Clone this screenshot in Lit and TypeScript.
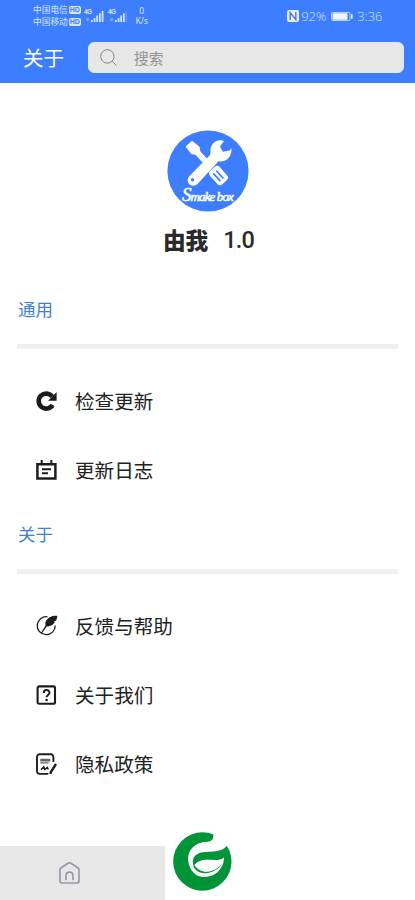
import { LitElement, html, css, svg } from "lit";
import { customElement, property } from "lit/decorators.js";

const icons: Record<string, unknown> = {
  refresh: svg`<path d="M17.600 15A7.500 7.500 0 1 1 17.200 6.600" fill="none" stroke="#1c1c1c" stroke-width="4.600"/><path d="M21.600 2.300v8.400h-8.600z" fill="#1c1c1c"/>`,
  log: svg`<path d="M2.400 5.200h18v14.400h-18z" fill="none" stroke="#1c1c1c" stroke-width="2.500"/><path d="M6.700 1v4M16.300 1v4M7 10.300h9M7 14.300h6" fill="none" stroke="#1c1c1c" stroke-width="2"/>`,
  feather: svg`<path d="M12.500 1.800A9 9 0 1 0 20.200 10.500" fill="none" stroke="#1c1c1c" stroke-width="1.300"/><path d="M22.300.9c-5-.3-9.500 1.300-12 6.300l.2 3.200-4.500 7.300 1 .5 4.700-6.700c4.600 0 7.200-2.500 8.200-4.500l-1.500-.2 2.700-1.300c.8-1.500 1-3 1.200-4.600z" fill="#1c1c1c"/>`,
  question: svg`<rect x="2.600" y="2.400" width="17.400" height="17.400" rx="1.600" fill="none" stroke="#1c1c1c" stroke-width="2.100"/><path d="M8.700 8.900c0-3.800 5.800-3.600 5.800-.3 0 2.200-2.900 2.400-2.900 4.600" fill="none" stroke="#1c1c1c" stroke-width="2"/><circle cx="11.600" cy="16" r="1.300" fill="#1c1c1c"/>`,
  policy: svg`<path d="M18.400 9V3.900a2.600 2.600 0 0 0-2.600-2.600H4.600A2.600 2.600 0 0 0 2 3.900v14.400a2.600 2.600 0 0 0 2.600 2.600h8.700" fill="none" stroke="#1c1c1c" stroke-width="1.900"/><path d="M5.300 5.800h10v2.600h-10zM5.300 9.200h8.400v1.200H5.300z" fill="#666"/><path d="M6 16.800l2.800-3 1 2.700 2.500-2.200 1 2.200" fill="none" stroke="#1c1c1c" stroke-width="1.400"/><path d="M21 11l-5.200 8.100-.4 1.900" fill="none" stroke="#1c1c1c" stroke-width="2.400"/>`,
};

@customElement("menu-section")
class MenuSection extends LitElement {
  @property() label = "";
  @property({ attribute: false }) items: { icon: string; text: string }[] = [];

  static styles = css`
    :host { display: block; }
    .label { height: 36px; line-height: 36px; padding-left: 18px; font-size: 17.5px; color: #4380d4; }
    .rule { height: 5px; margin: 17px 17px 17.5px; background: #efefef; }
    .row { display: flex; align-items: center; height: 69px; padding-left: 34.5px; }
    .icon { width: 23px; height: 23px; flex: none; }
    .text { margin-left: 17.5px; font-size: 19.6px; line-height: 28px; color: #222; }
  `;

  render() {
    return html`
      <div class="label">${this.label}</div>
      <div class="rule"></div>
      ${this.items.map((i) => html`
        <div class="row">
          <svg class="icon" viewBox="0 0 23 23">${icons[i.icon]}</svg>
          <span class="text">${i.text}</span>
        </div>`)}
    `;
  }
}

@customElement("app-root")
class AppRoot extends LitElement {
  static styles = css`
    :host { display: flex; flex-direction: column; height: 900px; background: #fff; overflow: hidden;
      font-family: "Noto Sans CJK SC", sans-serif; }
    svg { display: block; flex: none; }
    .header { height: 83px; background: #3d7eff; flex: none; }
    .status { display: flex; height: 32px; color: #d9e7ff; align-items: center; padding-left: 33px; box-sizing: border-box; }
    .carrier { display: flex; align-items: center; height: 12.5px; font-size: 8.7px; line-height: 12.5px; }
    .hd { margin-left: 1px; width: 12px; height: 8px; border-radius: 2px; background: #d9e7ff; color: #3d7eff;
      font: bold 7px/8px "Liberation Sans", sans-serif; text-align: center; }
    .signals { margin-left: 3px; }
    .speed { margin-left: 7px; width: 14px; font: 8.5px/10px "Noto Sans", sans-serif; text-align: center; }
    .right { display: flex; align-items: center; margin-left: auto; padding-right: 32.5px;
      font: 300 13px/18px "Open Sans", "Noto Sans", sans-serif; }
    .percent { margin-left: 2px; width: 26px; }
    .battery { margin: 0 4px; }
    .bar { display: flex; align-items: center; height: 51px; padding: 0 11px 0 23px; }
    .title { width: 64.5px; font-size: 20.5px; line-height: 30px; margin-top: -1px; color: #fff; }
    .search { display: flex; align-items: center; flex: 1; height: 31px; box-sizing: border-box; border-radius: 6px;
      background: #e7e7e7; border: 1px solid #dce6f5; padding-left: 11px; font-size: 14.7px; line-height: 22px; color: #929292; }
    .glass { margin-right: 17.5px; }
    .brand { display: flex; flex-direction: column; align-items: center; height: 208px; box-sizing: border-box; padding-top: 47px; flex: none; }
    .name { display: flex; margin-top: 12px; gap: 15px; font-size: 22.7px; line-height: 32px; color: #2a2a2a; margin-left: 2px; }
    .app { font-weight: 900; }
    .version { font: 500 23.500px/32px Roboto, sans-serif; letter-spacing: -.8px; }
    .second { margin-top: 11.5px; }
    .footer { display: flex; align-items: flex-end; height: 68px; margin-top: auto; flex: none; }
    .home { width: 165px; height: 54px; background: #e7e7e7; display: flex; align-items: center; box-sizing: border-box; padding-left: 58px; }
    .leaf { align-self: flex-start; margin-left: 8px; }
  `;

  render() {
    return html`
      <header class="header">
        <div class="status">
          <div>
            <div class="carrier">中国电信<span class="hd">HD</span></div>
            <div class="carrier">中国移动<span class="hd">HD</span></div>
          </div>
          <svg class="signals" width="44" height="16" viewBox="0 0 44 16" fill="#d9e7ff">
            <g font-family="Liberation Sans" font-size="6.500" font-weight="bold" letter-spacing="-.6"><text x="0" y="6">4G</text><text x="24" y="6">4G</text></g>
            <path d="M7 12h1.700v2H7zM9.700 10h1.700v4H9.700zM12.300 7.600H14V14h-1.700zM15 5.200h1.700V14H15zM17.700 3h1.700v11h-1.700z"/>
            <path d="M31 12h1.700v2H31zM33.700 10h1.700v4h-1.700zM36.300 7.600H38V14h-1.700zM39 5.200h1.700V14H39z"/>
            <path d="M41.700 3h1v11h-1zM2 10h3v3H2zM26 10h3v3h-3z" opacity=".35"/>
          </svg>
          <div class="speed">0<br />K/s</div>
          <div class="right">
            <svg width="12" height="12" viewBox="0 0 12 12">
              <rect width="12" height="12" rx="2" fill="#e3edff"/>
              <path d="M3.200 10V2.500l5.600 7V2" fill="none" stroke="#4c78c5" stroke-width="1.400"/>
            </svg>
            <span class="percent">92%</span>
            <svg class="battery" width="22" height="9" viewBox="0 0 22 9">
              <rect x=".5" y=".5" width="18.500" height="8" rx="1" fill="none" stroke="#b9d1ff"/>
              <path d="M1.500 1.300h15v6.400h-15zM20 2.200h1.600v4.600H20z" fill="#f0f5ff"/>
            </svg>
            <span>3:36</span>
          </div>
        </div>
        <div class="bar">
          <div class="title">关于</div>
          <div class="search">
            <svg class="glass" width="17" height="17" viewBox="0 0 17 17" fill="none" stroke="#858585">
              <circle cx="7.400" cy="7.400" r="6.700"/><path d="M12.200 12.200l4.200 4.200"/>
            </svg>
            搜索
          </div>
        </div>
      </header>

      <section class="brand">
        <svg width="82" height="82" viewBox="0 0 82 82">
          <circle cx="41" cy="41" r="40.600" fill="#3d7eff"/>
          <path d="M18.500 16.500l6.500-5.800 7.500 6 .8 4.500 6.700 7.600-4.300 4-7-7.800-4.500-1z" fill="#fff"/>
          <g transform="translate(51.500 45.500) rotate(-42)">
            <rect x="-6.500" y="-9" width="13" height="18" rx="3.500" fill="#fff"/>
            <path d="M-2.400-5v10.500M1.600-5v10.500" stroke="#3d7eff" stroke-width="1.700"/>
          </g>
          <path d="M43.500 22C42.500 14.500 49.500 8 57 11L53 16.500l2.800 5.200 6.700-1.200 2-2.300c.5 9-6 14.500-13 13L30.500 54c-5.500 5-13-1.500-8.500-7.500L43 25z" fill="#fff"/>
          <circle cx="25.500" cy="49.800" r="1.700" fill="#3d7eff"/>
          <text x="15" y="70.500" font-family="Liberation Serif" font-style="italic" font-size="13" letter-spacing="-.9" fill="#fff" stroke="#fff" stroke-width=".5"><tspan font-size="19">S</tspan>make box</text>
        </svg>
        <div class="name"><span class="app">由我</span><span class="version">1.0</span></div>
      </section>

      <menu-section label="通用" .items=${[
        { icon: "refresh", text: "检查更新" },
        { icon: "log", text: "更新日志" },
      ]}></menu-section>
      <menu-section class="second" label="关于" .items=${[
        { icon: "feather", text: "反馈与帮助" },
        { icon: "question", text: "关于我们" },
        { icon: "policy", text: "隐私政策" },
      ]}></menu-section>

      <footer class="footer">
        <div class="home">
          <svg width="23" height="23" viewBox="0 0 23 23" fill="none" stroke="#9d96a9" stroke-width="1.700" stroke-linejoin="round">
            <path d="M2 7.600q0-1 .9-1.600L10 1.300q1.500-1 3 0l7.100 4.700q.9.600.9 1.600v11.100q0 2.300-2.300 2.300H4.300Q2 21 2 18.700z"/>
            <path d="M8 17.500v-3.800c0-4.700 7-4.700 7 0v3.800" stroke-linecap="round"/>
          </svg>
        </div>
        <svg class="leaf" width="59" height="59" viewBox="519 37 177 177">
          <circle cx="607" cy="125.500" r="87.500" fill="#009338"/>
          <path d="M640 36V46Q642 58 632 64C618 69 607 65 592 73C566 87 560 112 567 135C575 160 592 172 614 172C645 172 672 148 672 113C657 128 629 117 606 122Q588 127 581 140C576 126 578 109 594 102C619 91 661 105 682 77L700 50V30z" fill="#fff"/>
          <path d="M580 138C589 170 646 168 667 130C642 163 600 165 584 137z" fill="#009338"/>
        </svg>
      </footer>
    `;
  }
}
